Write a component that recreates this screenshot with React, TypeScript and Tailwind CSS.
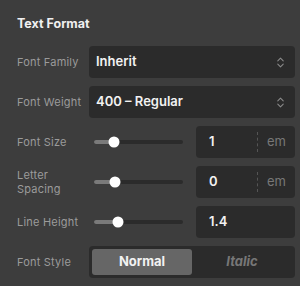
import { ChevronsUpDown } from "lucide-react"

function Label({ children }: { children: React.ReactNode }) {
  return <div className="w-[72px] shrink-0 text-[11px] leading-[14px] text-[#9b9b9b] tracking-[0.2px]">{children}</div>
}

function Select({ value }: { value: string }) {
  return (
    <div className="flex h-8 flex-1 items-center justify-between rounded-[4px] bg-[#2b2b2b] pl-[7px] pr-[8px]">
      <span className="text-[13px] font-semibold text-[#f2f2f2]">{value}</span>
      <ChevronsUpDown className="h-[13px] w-[13px] text-[#8a8a8a]" strokeWidth={2} />
    </div>
  )
}

function Slider({ pos }: { pos: number }) {
  return (
    <div className="flex h-8 w-[99px] shrink-0 items-center px-[5px]">
      <div className="relative h-[4px] w-full rounded-full bg-[#2b2b2b]">
        <div className="absolute left-0 top-0 h-full rounded-full bg-[#7a7a7a]" style={{ width: pos }} />
        <div
          className="absolute top-1/2 h-[11px] w-[11px] -translate-x-1/2 -translate-y-1/2 rounded-full bg-white"
          style={{ left: pos }}
        />
      </div>
    </div>
  )
}

function NumInput({ value, unit }: { value: string; unit?: string }) {
  return (
    <div className="flex h-8 w-[99px] shrink-0 items-center rounded-[4px] bg-[#2b2b2b]">
      <span className="flex-1 pl-[13px] text-[13px] font-semibold text-[#f2f2f2]">{value}</span>
      {unit && (
        <>
          <div className="h-[20px] border-l border-dashed border-[#555]" />
          <span className="w-[37px] text-center text-[13px] text-[#777]">{unit}</span>
        </>
      )}
    </div>
  )
}

export default function App() {
  return (
    <div
      className="h-[286px] w-[300px] bg-[#3d3d3d] px-[17px] pt-[16px] pr-[5px]"
      style={{ fontFamily: "Inter, 'Liberation Sans', sans-serif" }}
    >
      <div className="mb-[14px] h-[16px] text-[12.5px] font-bold leading-[16px] text-[#f0f0f0]">Text Format</div>
      <div className="flex flex-col gap-2">
        <div className="flex items-center">
          <Label>Font Family</Label>
          <Select value="Inherit" />
        </div>
        <div className="flex items-center">
          <Label>Font Weight</Label>
          <Select value="400 – Regular" />
        </div>
        <div className="flex items-center">
          <Label>Font Size</Label>
          <Slider pos={20} />
          <div className="w-2" />
          <NumInput value="1" unit="em" />
        </div>
        <div className="flex items-center">
          <Label>
            Letter
            <br />
            Spacing
          </Label>
          <Slider pos={21} />
          <div className="w-2" />
          <NumInput value="0" unit="em" />
        </div>
        <div className="flex items-center">
          <Label>Line Height</Label>
          <Slider pos={24} />
          <div className="w-2" />
          <NumInput value="1.4" />
        </div>
        <div className="flex items-center">
          <Label>Font Style</Label>
          <div className="flex h-8 flex-1 rounded-[4px] bg-[#2b2b2b] p-[3px]">
            <div className="flex flex-1 items-center justify-center rounded-[3px] bg-[#666] text-[13px] font-bold text-[#f2f2f2]">
              Normal
            </div>
            <div className="flex flex-1 items-center justify-center text-[13px] font-bold italic text-[#777]">
              Italic
            </div>
          </div>
        </div>
      </div>
    </div>
  )
}
